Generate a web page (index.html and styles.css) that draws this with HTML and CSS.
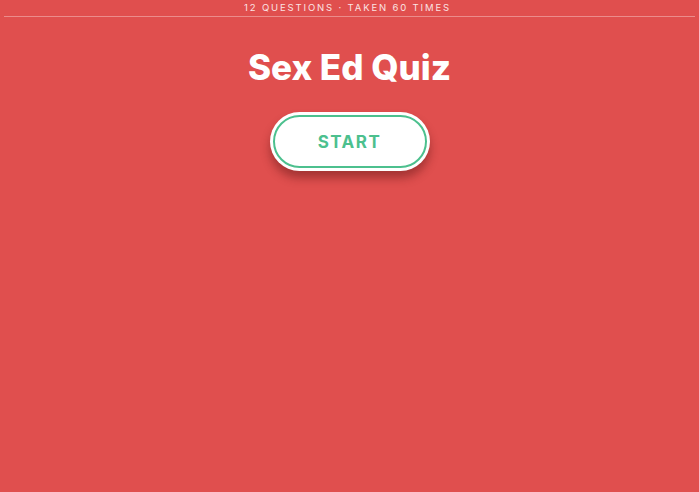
FILE: index.html
```html
<!DOCTYPE html>
<html lang="en">
<head>
  <meta charset="UTF-8">
  <title>Sex Ed Quiz</title>
  <meta name="viewport" content="width=device-width, initial-scale=1.0">
  <link rel="stylesheet" href="styles.css">
</head>
<body>

  <header class="quiz-meta">
    <p>12 Questions · Taken 60 Times</p>
  </header>

  <main class="quiz-intro">
    <h1>Sex Ed Quiz</h1>
    <button class="start-btn"><span>Start</span></button>
  </main>

</body>
</html>
```

FILE: styles.css
```css
* { box-sizing: border-box; margin: 0; padding: 0; font-family: Inter, Roboto, "Liberation Sans", sans-serif; }
html, body { height: 100%; }
body { background: #e04f4e; color: white; padding: 0 4px; }

.quiz-meta {
  border-bottom: 1px solid rgba(255, 255, 255, 0.35);
  text-align: center;
  padding-top: 2px;
  height: 17px;
}

.quiz-meta p {
  font-size: 9.5px;
  letter-spacing: 1.85px;
  text-transform: uppercase;
  line-height: 11px;
  color: #fbe3e3;
  margin-right: 4px;
}

.quiz-intro {
  display: flex;
  flex-direction: column;
  align-items: center;
}

h1 {
  font-size: 35px;
  font-weight: 800;
  margin-top: 29px;
  line-height: 42px;
}

.start-btn {
  margin-top: 24px;
  width: 160px;
  height: 59px;
  background: white;
  border: none;
  border-radius: 30px;
  padding: 3px;
  box-shadow: 0 7px 10px rgba(90, 20, 20, 0.45);
  cursor: pointer;
}

.start-btn span {
  display: flex;
  align-items: center;
  justify-content: center;
  height: 100%;
  border: 2px solid #4cc08e;
  border-radius: 27px;
  color: #4cc08e;
  font-size: 17px;
  font-weight: 700;
  letter-spacing: 1.5px;
  text-transform: uppercase;
}
```
